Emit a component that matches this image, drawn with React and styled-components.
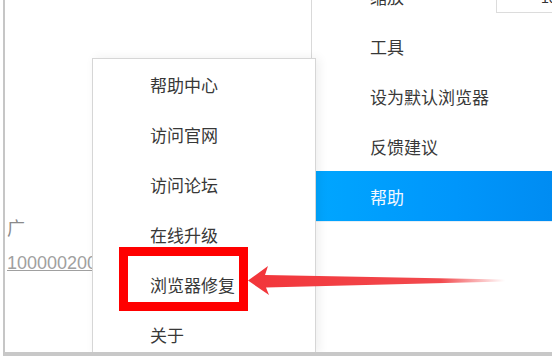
import styled, { createGlobalStyle } from "styled-components";

const GlobalStyle = createGlobalStyle`
  html, body {
    margin: 0;
    padding: 0;
    background: #ffffff;
  }
  body {
    font-family: "Noto Sans CJK SC", "Liberation Sans", sans-serif;
  }
`;

const mainItems = [
  { label: "缩放", zoom: true },
  { label: "工具" },
  { label: "设为默认浏览器" },
  { label: "反馈建议" },
  { label: "帮助", active: true },
];

const subItems = ["帮助中心", "访问官网", "访问论坛", "在线升级", "浏览器修复", "关于"];

const App = () => {
  return (
    <Screen>
      <GlobalStyle />
      <Frame>
        <PageText>
          <Fragment>广</Fragment>
          <PageLink>100000200</PageLink>
        </PageText>

        <MainMenu>
          {mainItems.map((item) => (
            <MainRow key={item.label} $active={item.active}>
              <span>{item.label}</span>
              {item.zoom && <ZoomBox>100%</ZoomBox>}
            </MainRow>
          ))}
        </MainMenu>

        <SubMenu>
          {subItems.map((label) => (
            <SubRow key={label}>{label}</SubRow>
          ))}
        </SubMenu>
      </Frame>

      <Highlight />
      <Arrow viewBox="0 0 552 356" width="552" height="356">
        <defs>
          <linearGradient id="tail" x1="248" y1="0" x2="505" y2="0" gradientUnits="userSpaceOnUse">
            <stop offset="0" stopColor="#f2353a" />
            <stop offset="0.75" stopColor="#f24a4e" />
            <stop offset="1" stopColor="#f24a4e" stopOpacity="0" />
          </linearGradient>
        </defs>
        <polygon
          points="248,280.5 268,266 265,275 505,279.5 505,281.5 266,287.5 269,295"
          fill="url(#tail)"
        />
      </Arrow>
    </Screen>
  );
};

const Screen = styled.div`
  position: relative;
  width: 552px;
  height: 356px;
  padding-left: 3px;
  box-sizing: border-box;
  overflow: hidden;
  background: #ffffff;
`;

const Frame = styled.div`
  position: relative;
  height: 356px;
  box-sizing: border-box;
  border-left: 2px solid #c6c6c6;
  border-bottom: 4px solid #c8c8c8;
  overflow: hidden;
`;

const PageText = styled.div`
  display: flex;
  flex-direction: column;
  gap: 16px;
  padding: 217px 0 0 2px;
  color: #8a8a8a;
  white-space: nowrap;
`;

const Fragment = styled.span`
  font-size: 18px;
  line-height: 20px;
`;

const PageLink = styled.span`
  font-family: "Liberation Sans", sans-serif;
  font-size: 18px;
  line-height: 20px;
  color: #a0a0a0;
  text-decoration: underline;
`;

const MainMenu = styled.div`
  position: absolute;
  left: 306px;
  top: -29px;
  right: 0;
  bottom: 0;
  background: #ffffff;
  border-left: 1px solid #d9d9d9;
`;

const MainRow = styled.div`
  display: flex;
  align-items: center;
  height: 50px;
  padding-left: 58px;
  font-size: 17px;
  color: ${({ $active }) => ($active ? "#f2f8ff" : "#383838")};
  background: ${({ $active }) =>
    $active ? "linear-gradient(90deg, #00a6ff 0%, #0096fb 60%, #008cf2 100%)" : "transparent"};
  border-bottom: ${({ $active }) => ($active ? "1px solid #e6eef5" : "none")};
`;

const ZoomBox = styled.div`
  position: relative;
  top: 2px;
  margin-left: auto;
  margin-right: -30px;
  width: 86px;
  height: 30px;
  box-sizing: border-box;
  padding-left: 44px;
  border: 1px solid #dcdcdc;
  font-family: "Liberation Sans", sans-serif;
  font-size: 14px;
  color: #333;
  display: flex;
  align-items: center;
  flex-shrink: 0;
`;

const SubMenu = styled.div`
  position: absolute;
  left: 87px;
  top: 58px;
  width: 224px;
  bottom: -2px;
  box-sizing: border-box;
  background: #ffffff;
  border: 1px solid #d6d6d6;
  box-shadow: 3px 0 10px rgba(0, 0, 0, 0.07);
`;

const SubRow = styled.div`
  display: flex;
  align-items: center;
  height: 50px;
  padding-left: 57px;
  font-size: 17px;
  color: #383838;
`;

const Highlight = styled.div`
  position: absolute;
  left: 119px;
  top: 247px;
  width: 129px;
  height: 64px;
  box-sizing: border-box;
  border: 9px solid #ff0000;
`;

const Arrow = styled.svg`
  position: absolute;
  left: 0;
  top: 0;
  pointer-events: none;
`;

export default App;
